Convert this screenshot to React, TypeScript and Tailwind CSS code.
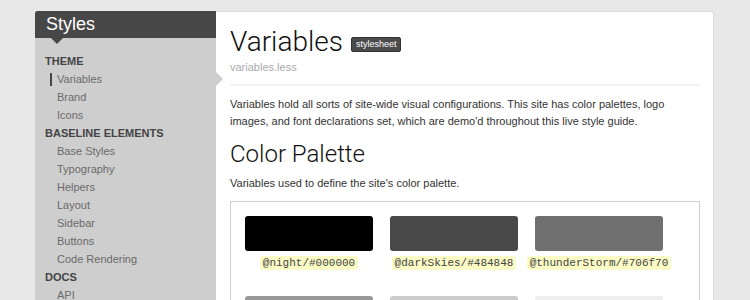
import React from 'react';

type NavItem = { label: string; active?: boolean };
type NavGroup = { title: string; items: NavItem[] };

const nav: NavGroup[] = [
  { title: 'Theme', items: [{ label: 'Variables', active: true }, { label: 'Brand' }, { label: 'Icons' }] },
  {
    title: 'Baseline Elements',
    items: [
      { label: 'Base Styles' },
      { label: 'Typography' },
      { label: 'Helpers' },
      { label: 'Layout' },
      { label: 'Sidebar' },
      { label: 'Buttons' },
      { label: 'Code Rendering' },
    ],
  },
  { title: 'Docs', items: [{ label: 'API' }, { label: 'Changelog' }] },
];

const swatches = [
  { name: '@night', hex: '#000000' },
  { name: '@darkSkies', hex: '#484848' },
  { name: '@thunderStorm', hex: '#706f70' },
  { name: '@overcast', hex: '#999999' },
  { name: '@fog', hex: '#cccccc' },
  { name: '@snow', hex: '#eeeeee' },
];

function Sidebar() {
  return (
    <aside className="w-[181px] shrink-0 bg-[#cecece]">
      {/* header with little down arrow */}
      <div className="relative h-[27px] rounded-tl-[3px] bg-[#474747] pl-[11px]">
        <div className="text-[18px] leading-[27px] text-white">Styles</div>
        <div className="absolute left-[16px] top-[27px] h-0 w-0 border-x-[6px] border-t-[6px] border-x-transparent border-t-[#474747]" />
      </div>
      <nav className="pl-[10px] pt-[14px] pb-4">
        {nav.map((g) => (
          <div key={g.title}>
            <div className="text-[11px] font-bold uppercase leading-[18px] text-[#444]">{g.title}</div>
            {g.items.map((it) => (
              <div key={it.label} className="relative flex items-center h-[18px] pl-[12px] text-[11px] text-[#6a6a6a]">
                {it.active && (
                  <>
                    <span className="absolute left-[5px] top-[3px] h-[13px] w-[2px] bg-[#444]" />
                    <span className="absolute left-[171px] top-[2px] h-0 w-0 border-y-[7px] border-l-[7px] border-y-transparent border-l-[#cecece]" />
                  </>
                )}
                {it.label}
              </div>
            ))}
          </div>
        ))}
      </nav>
    </aside>
  );
}

export default function App() {
  return (
    <div className="h-[300px] overflow-hidden bg-[#e9e8e9] pt-[11px] pl-[35px] font-['Liberation_Sans',Arial,sans-serif]">
      <div className="flex w-[679px]">
        <Sidebar />
        <main className="flex-1 rounded-tr-[3px] border-t border-r border-[#dcdcdc] bg-white pl-[14px] pr-[13px] pt-[13px]">
          <div className="flex items-center gap-[8px]">
            <h1 className="text-[28px] font-light leading-[34px] text-[#111] font-['Roboto',sans-serif]">Variables</h1>
            <span className="mt-[4px] rounded-[2px] border border-[#333] bg-[#4b4b4b] px-[4px] text-[9px] leading-[13px] text-white">stylesheet</span>
          </div>
          <div className="mt-[1px] text-[11px] leading-[14px] text-[#aaa]">variables.less</div>
          <div className="mt-[10px] h-[2px] bg-[#f3f3f3]" />
          <p className="mt-[10px] text-[11px] leading-[17px] text-[#333]">
            Variables hold all sorts of site-wide visual configurations. This site has color palettes, logo
            <br />
            images, and font declarations set, which are demo'd throughout this live style guide.
          </p>
          <h2 className="mt-[9px] text-[24px] font-light leading-[30px] text-[#111] font-['Roboto',sans-serif]">Color Palette</h2>
          <p className="mt-[6px] text-[11px] leading-[17px] text-[#333]">Variables used to define the site's color palette.</p>
          <div className="mt-[9px] border border-[#cfcfcf] px-[14px] pt-[14px] pb-4">
            <div className="grid grid-cols-[128px_128px_128px] gap-x-[17px] gap-y-[26px]">
              {swatches.map((s) => (
                <div key={s.name} className="flex flex-col items-center">
                  <div className="h-[35px] w-full rounded-[3px]" style={{ backgroundColor: s.hex }} />
                  <span className="mt-[5px] whitespace-nowrap rounded-[3px] bg-[#fbfbc6] px-[3px] text-[11px] leading-[14px] text-[#444] font-['Liberation_Mono',monospace]">
                    {s.name}/{s.hex}
                  </span>
                </div>
              ))}
            </div>
          </div>
        </main>
      </div>
    </div>
  );
}
